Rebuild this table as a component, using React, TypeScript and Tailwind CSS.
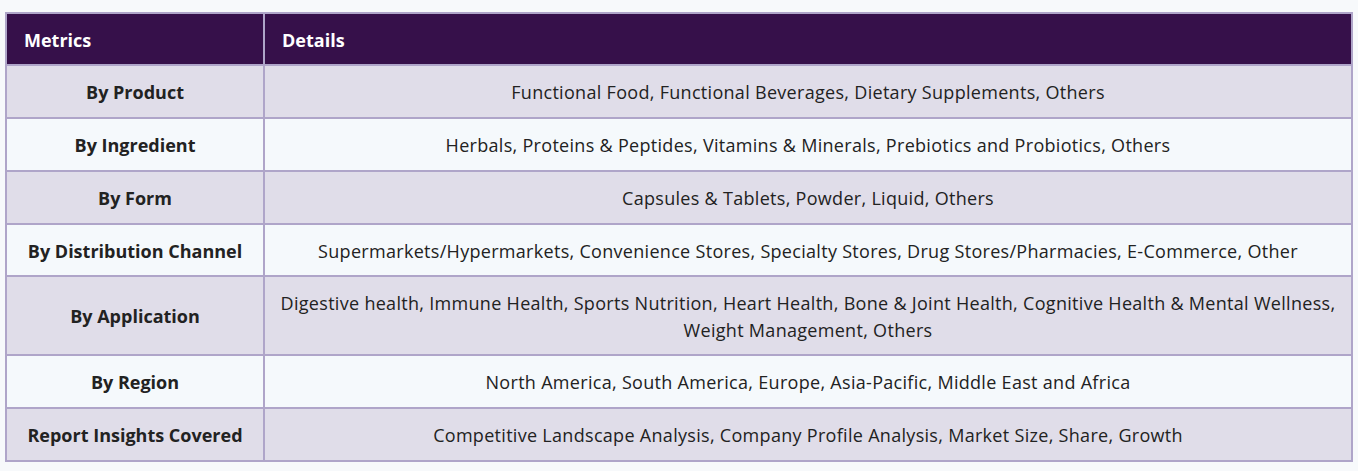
import React from 'react';

const rows: [string, string[], string][] = [
  ['By Product', ['Functional Food, Functional Beverages, Dietary Supplements, Others'], 'h-[53px]'],
  ['By Ingredient', ['Herbals, Proteins & Peptides, Vitamins & Minerals, Prebiotics and Probiotics, Others'], 'h-[53px]'],
  ['By Form', ['Capsules & Tablets, Powder, Liquid, Others'], 'h-[53px]'],
  [
    'By Distribution Channel',
    ['Supermarkets/Hypermarkets, Convenience Stores, Specialty Stores, Drug Stores/Pharmacies, E-Commerce, Other'],
    'h-[52px]',
  ],
  [
    'By Application',
    [
      'Digestive health, Immune Health, Sports Nutrition, Heart Health, Bone & Joint Health, Cognitive Health & Mental Wellness,',
      'Weight Management, Others',
    ],
    'h-[79px]',
  ],
  ['By Region', ['North America, South America, Europe, Asia-Pacific, Middle East and Africa'], 'h-[53px]'],
  ['Report Insights Covered', ['Competitive Landscape Analysis, Company Profile Analysis, Market Size, Share, Growth'], 'h-[53px]'],
];

export default function App() {
  return (
    <div className="min-h-[471px] bg-[#f7f9fb] pt-3 pl-[5px] pr-[5px] font-['Open_Sans',sans-serif]">
      <table className="w-[1348px] border-collapse border-2 border-[#afa5c9] text-[18px] leading-[27px]">
        <thead>
          <tr className="bg-[#36104a] text-white h-[52px]">
            <th className="w-[258px] border-2 border-[#afa5c9] px-[17px] pt-[2px] text-left font-bold">Metrics</th>
            <th className="border-2 border-[#afa5c9] px-[17px] pt-[2px] text-left font-bold">Details</th>
          </tr>
        </thead>
        <tbody>
          {rows.map(([metric, lines, height], i) => (
            <tr key={metric} className={`${height} ${i % 2 === 0 ? 'bg-[#e0dde9]' : 'bg-[#f5f9fc]'}`}>
              <td className="border-2 border-[#afa5c9] px-2 pt-[12px] pb-[10px] text-center font-bold text-[#222222]">
                {metric}
              </td>
              <td className="border-2 border-[#afa5c9] px-2 pt-[12px] pb-[10px] text-center tracking-[0.3px] text-[#222222]">
                {lines.map((line, j) => (
                  <div key={j} className="whitespace-nowrap">
                    {line}
                  </div>
                ))}
              </td>
            </tr>
          ))}
        </tbody>
      </table>
    </div>
  );
}
